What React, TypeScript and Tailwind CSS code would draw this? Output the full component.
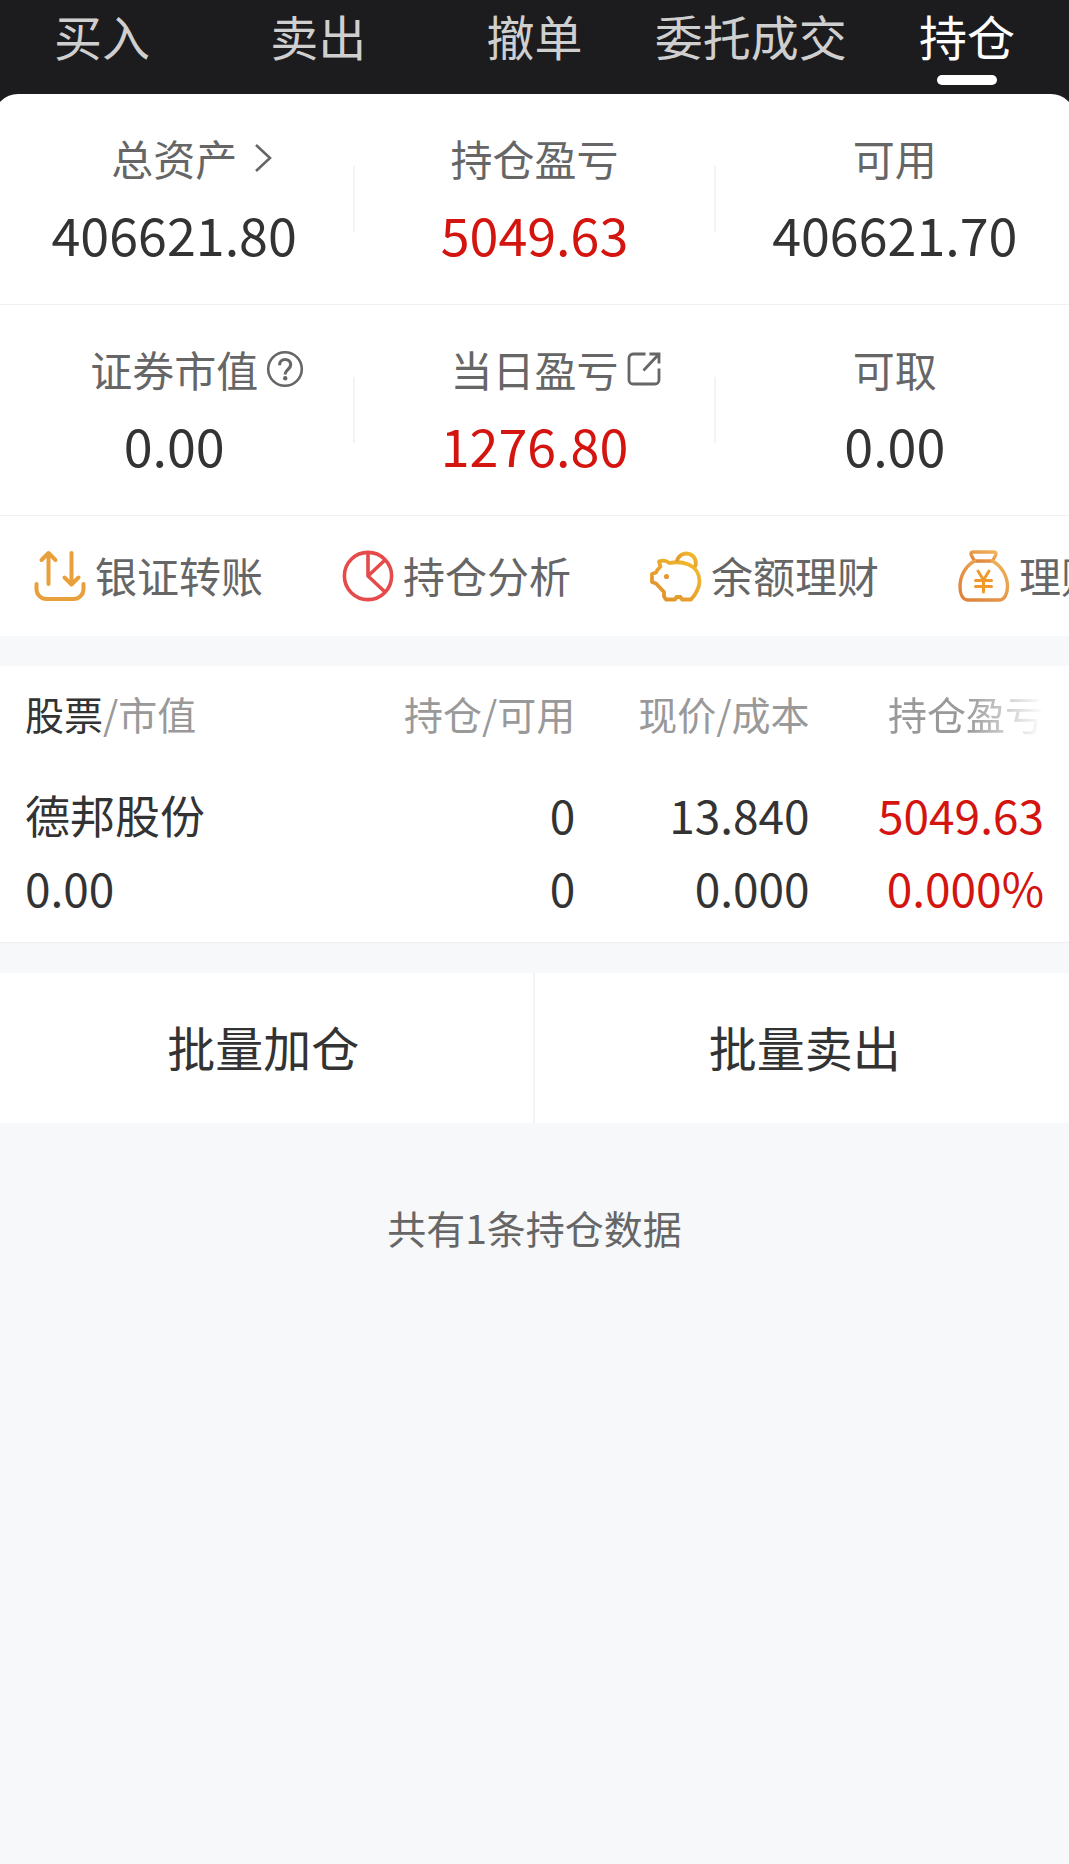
import React from 'react'

type Stat = {
  label: string
  value: string
  up?: boolean
  icon?: React.ReactNode
}

const ChevronIcon = () => (
  <svg className="ml-4 h-[30px] w-5 shrink-0" viewBox="0 0 20 30" fill="none" stroke="#666" strokeWidth="2.6">
    <path d="M3 2 17 15 3 28" />
  </svg>
)

const HelpIcon = () => (
  <svg className="ml-2 size-[38px] shrink-0" viewBox="0 0 38 38" fill="none" stroke="#666" strokeWidth="2.6">
    <circle cx="19" cy="19" r="16.8" />
    <path d="M13.5 15.2c0-3.4 2.4-5.7 5.6-5.7s5.6 2.2 5.6 5.3c0 4.6-5.6 4.6-5.6 9.8" strokeWidth="3.2" />
    <circle cx="19.2" cy="28.2" r="2.2" fill="#666" stroke="none" />
  </svg>
)

const ShareIcon = () => (
  <svg className="ml-2 size-[34px] shrink-0" viewBox="0 0 34 34" fill="none" stroke="#666" strokeWidth="2.8">
    <path d="M18.5 2H6a4 4 0 0 0-4 4v22a4 4 0 0 0 4 4h22a4 4 0 0 0 4-4V16.5" />
    <path d="M22.5 2H32v9.5M32 2 16.5 18.5" />
  </svg>
)

const TransferIcon = () => (
  <svg className="size-[52px] shrink-0" viewBox="0 0 52 52" fill="none" stroke="#e8a03c" strokeWidth="4" strokeLinecap="round" strokeLinejoin="round">
    <path d="M14.5 34V3M7.5 10l7-7 7 7" />
    <path d="M37.5 3v31M30.5 27.5l7 7 7-7" />
    <path d="M2.5 34v5a10 10 0 0 0 10 10h27a10 10 0 0 0 10-10v-5" />
  </svg>
)

const PieIcon = () => (
  <svg className="size-[52px] shrink-0" viewBox="0 0 52 52" fill="none" stroke="#e54b4b" strokeWidth="3.6" strokeLinejoin="round">
    <circle cx="26" cy="26" r="23.6" />
    <path d="M26 2v24l17-16M26 26l17 16" />
  </svg>
)

const PiggyIcon = () => (
  <svg className="size-[52px] shrink-0" viewBox="0 0 52 52" fill="none" stroke="url(#piggy)" strokeWidth="3.8" strokeLinejoin="round">
    <defs>
      <linearGradient id="piggy" x1="0" y1="1" x2="1" y2="0">
        <stop offset="0" stopColor="#e08c2e" />
        <stop offset="1" stopColor="#f2bd2c" />
      </linearGradient>
    </defs>
    <path d="M9 11.5c3.500-1.500 7.500-1 10.500 1.500 6-1.200 13-1 19 1.500C45.500 17.500 49.500 24 49.500 31c0 8-4 13.500-8.500 18.500h-9L30.500 47h-4L25 49.500h-9l-2-3V42L6 33.500 2 32v-8l4-1.500c1-2.500 2.500-4 4.500-6L9 11.500Z" />
    <path d="M27 11.500a9.500 9.500 0 1 1 18 5.500" />
    <circle cx="16.5" cy="26.500" r="2.6" fill="#e59a35" stroke="none" />
  </svg>
)

const MoneyBagIcon = () => (
  <svg className="size-[52px] shrink-0" viewBox="0 0 52 52" fill="none" stroke="url(#bag)" strokeWidth="3.4" strokeLinecap="round" strokeLinejoin="round">
    <defs>
      <linearGradient id="bag" x1="0" y1="1" x2="1" y2="0">
        <stop offset="0" stopColor="#dd7f3a" />
        <stop offset="1" stopColor="#efb45c" />
      </linearGradient>
    </defs>
    <path d="M15 2h21c2 0 2.500 1.500 1.500 3.500L34.500 11h-18l-3-5.500C12.500 3.500 13 2 15 2Z" />
    <path d="M16.500 11C7.500 16 2 26 2 36.500 2 44 4.500 50 10 50h31c5.500 0 8.500-6 8.500-13.500C49.500 26 43.500 16 34.500 11" />
    <path d="m20 21 5.500 9L31 21M17.500 30.500h16M17.500 36.500h16M25.500 30v12" stroke="#f09a2c" strokeWidth="3" />
  </svg>
)

const TABS = ['买入', '卖出', '撤单', '委托成交', '持仓']

const STATS: Stat[][] = [
  [
    { label: '总资产', value: '406621.80', icon: <ChevronIcon /> },
    { label: '持仓盈亏', value: '5049.63', up: true },
    { label: '可用', value: '406621.70' },
  ],
  [
    { label: '证券市值', value: '0.00', icon: <HelpIcon /> },
    { label: '当日盈亏', value: '1276.80', up: true, icon: <ShareIcon /> },
    { label: '可取', value: '0.00' },
  ],
]

const ACTIONS = [
  { label: '银证转账', icon: <TransferIcon /> },
  { label: '持仓分析', icon: <PieIcon /> },
  { label: '余额理财', icon: <PiggyIcon /> },
  { label: '理财', icon: <MoneyBagIcon /> },
]

const HOLDINGS = [
  {
    name: '德邦股份',
    marketValue: '0.00',
    amount: '0',
    available: '0',
    price: '13.840',
    cost: '0.000',
    profit: '5049.63',
    profitRate: '0.000%',
  },
]

const StatCell = ({ label, value, up, icon }: Stat) => (
  <div className="flex flex-1 flex-col items-center gap-2.5">
    <dt className="flex items-center text-[42px] leading-[60px] text-[#666]">
      {label}
      {/* zero-width slot, so the label itself stays centred over the value */}
      {icon && <span className="flex w-0 items-center">{icon}</span>}
    </dt>
    <dd className={`text-[52px] leading-[72px] ${up ? 'text-[#d3140f]' : 'text-[#333]'}`}>{value}</dd>
  </div>
)

const App = () => {
  return (
    <div className="min-h-screen overflow-hidden bg-[#f7f8fa] font-['Noto_Sans_CJK_SC',sans-serif] text-[#333]">
      <div className="-mx-1.5">
        <div className="bg-[#1c1c1e]">
          <nav className="grid grid-cols-5 pb-[9px]">
            {TABS.map((tab) => {
              const active = tab === '持仓'
              return (
                <button
                  key={tab}
                  className={`flex flex-col items-center gap-[5px] text-[48px] leading-[70px] whitespace-nowrap ${active ? 'text-white' : 'text-[#cfcfcf]'}`}
                >
                  {tab}
                  <span className={`h-2.5 w-[60px] rounded-full ${active ? 'bg-white' : ''}`} />
                </button>
              )
            })}
          </nav>

          <section className="rounded-t-3xl bg-white">
            {STATS.map((row, i) => (
              <dl key={i} className="flex items-center border-b border-[#f0f0f0] py-[34px]">
                {row.map((stat, j) => (
                  <React.Fragment key={stat.label}>
                    {j > 0 && <div className="-mx-px h-[66px] w-0.5 bg-[#f4f4f4]" />}
                    <StatCell {...stat} />
                  </React.Fragment>
                ))}
              </dl>
            ))}
            <div className="flex h-[120px] items-center gap-[79px] overflow-hidden pl-10">
              {ACTIONS.map((action) => (
                <button key={action.label} className="flex shrink-0 items-center gap-[9px]">
                  {action.icon}
                  <span className="pb-0.5 text-[42px] leading-[60px] text-[#666]">{action.label}</span>
                </button>
              ))}
            </div>
          </section>
        </div>

        <section className="mt-[30px] border-b border-[#eeeff1] bg-white px-[31px] pt-[17px] pb-[18px]">
          <table className="w-full table-fixed text-right">
            <thead className="text-[39px] leading-[60px] text-[#999]">
              <tr>
                <th className="w-[31%] text-left font-normal">
                  <span className="text-[#333]">股票</span>/市值
                </th>
                <th className="w-[23%] font-normal">持仓/可用</th>
                <th className="w-[23%] font-normal">现价/成本</th>
                <th className="w-[23%] font-normal">
                  <span className="inline-block [mask-image:linear-gradient(to_right,#000_50%,transparent)]">持仓盈亏</span>
                </th>
              </tr>
            </thead>
            <tbody className="text-[46px] leading-[73px]">
              {HOLDINGS.map((item) => (
                <tr key={item.name}>
                  <td className="pt-[35px] text-left">
                    <div className="text-[45px] leading-[73px]">{item.name}</div>
                    <div>{item.marketValue}</div>
                  </td>
                  <td className="pt-[35px]">
                    <div>{item.amount}</div>
                    <div>{item.available}</div>
                  </td>
                  <td className="pt-[35px]">
                    <div>{item.price}</div>
                    <div>{item.cost}</div>
                  </td>
                  <td className="pt-[35px] text-[#d3140f]">
                    <div>{item.profit}</div>
                    <div>{item.profitRate}</div>
                  </td>
                </tr>
              ))}
            </tbody>
          </table>
        </section>

        <div className="mt-[30px] grid grid-cols-2 bg-white text-[48px]">
          <button className="h-[150px] border-r-2 border-[#f4f4f6] pb-1">批量加仓</button>
          <button className="h-[150px] pb-1">批量卖出</button>
        </div>

        <p className="pt-[74px] text-center text-[39px] leading-[60px] text-[#666]">共有1条持仓数据</p>
      </div>
    </div>
  )
}

export default App
